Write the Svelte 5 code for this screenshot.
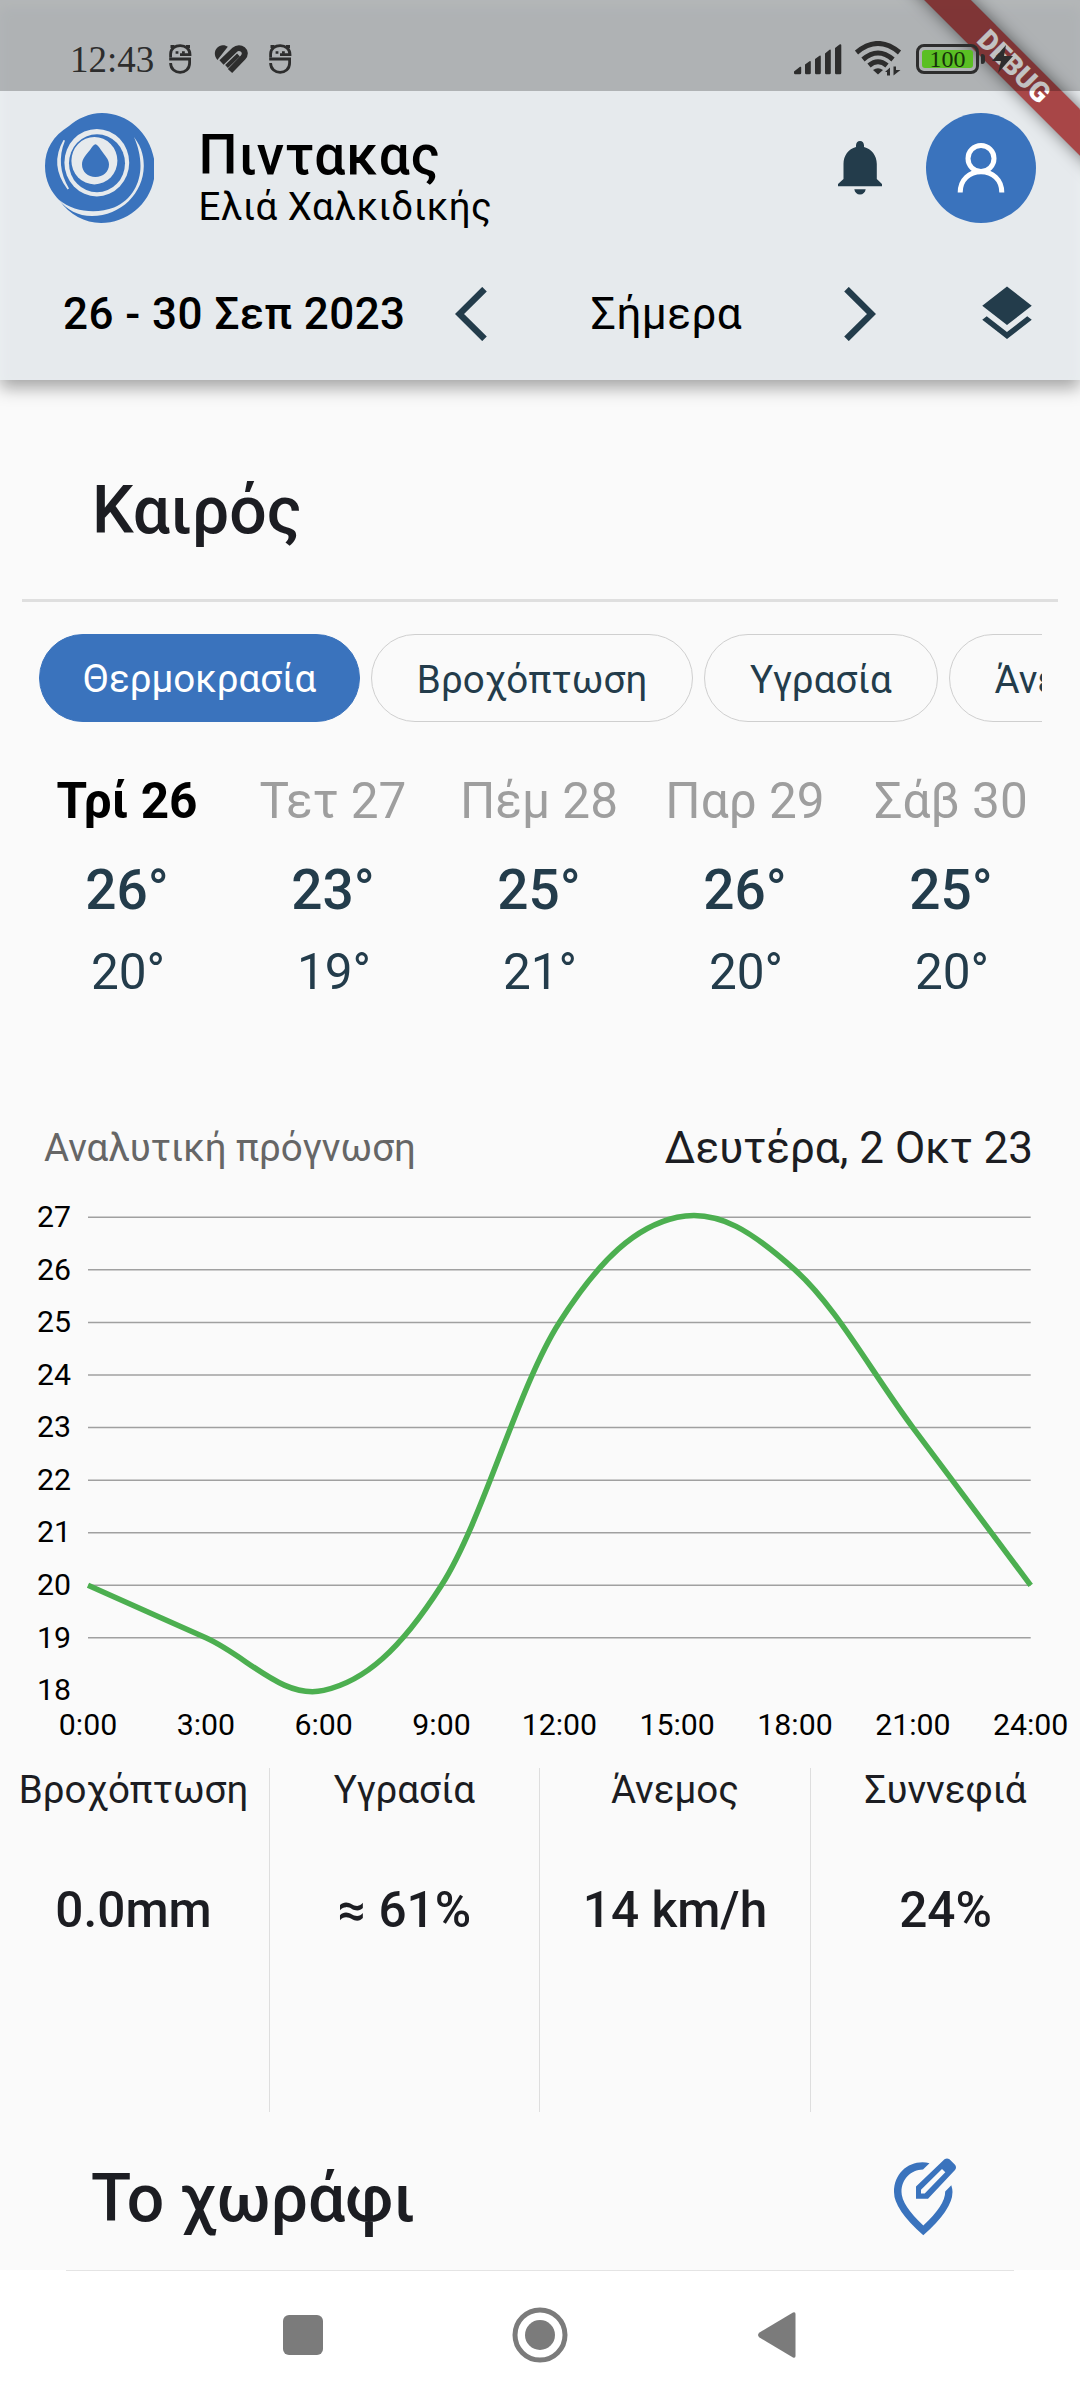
<script>
	const chips = ['Θερμοκρασία', 'Βροχόπτωση', 'Υγρασία', 'Άνεμος'];
	let activeChip = $state('Θερμοκρασία');

	const days = [
		{ name: 'Τρί 26', high: 26, low: 20 },
		{ name: 'Τετ 27', high: 23, low: 19 },
		{ name: 'Πέμ 28', high: 25, low: 21 },
		{ name: 'Παρ 29', high: 26, low: 20 },
		{ name: 'Σάβ 30', high: 25, low: 20 }
	];
	let activeDay = $state(0);

	const stats = [
		{ label: 'Βροχόπτωση', value: '0.0mm' },
		{ label: 'Υγρασία', value: '≈ 61%' },
		{ label: 'Άνεμος', value: '14 km/h' },
		{ label: 'Συννεφιά', value: '24%' }
	];

	// chart
	const temps = [20, 19, 18, 20, 25, 27, 26, 23, 20];
	const ticks = [27, 26, 25, 24, 23, 22, 21, 20, 19, 18];
	const left = 88;
	const right = 1030.7;
	const top = 39.3;
	const step = 52.57;
	const smoothness = 0.35;

	const x = (i) => left + (i * (right - left)) / (temps.length - 1);
	const y = (t) => top + (27 - t) * step;

	function curve(values) {
		const pts = values.map((v, i) => [x(i), y(v)]);
		let d = `M${pts[0][0]} ${pts[0][1]}`;
		let off = [0, 0];
		for (let i = 1; i < pts.length; i++) {
			const prev = pts[i - 1];
			const cur = pts[i];
			const next = pts[i + 1] ?? cur;
			const c1 = [prev[0] + off[0], prev[1] + off[1]];
			off = [((next[0] - prev[0]) / 2) * smoothness, ((next[1] - prev[1]) / 2) * smoothness];
			d += ` C${c1[0]} ${c1[1]} ${cur[0] - off[0]} ${cur[1] - off[1]} ${cur[0]} ${cur[1]}`;
		}
		return d;
	}
</script>

{#snippet creature()}
	<svg class="creature" width="23" height="30" viewBox="0 0 23 30">
		<path d="M1.6 13.5V10C1.6-1.2 21-1.2 21 10.6H11" />
		<path d="M.2 15H20.6V19C20.6 31.5 1.6 31.5 1.6 19" />
		<path class="solid" d="M1.5 1h4v3h-4zM17 1h4v3h-4zM6.6 7.2h2.8v2.6H6.6zM13 7.2h2.8v2.6H13z" />
	</svg>
{/snippet}

<div class="screen">
	<!-- System status bar, drawn over the app bar -->
	<div class="status">
		<span class="clock">12:43</span>
		{@render creature()}
		<svg class="heart" width="34" height="29" viewBox="0 0 34 29">
			<path class="solid" d="M3.400 15C-2.600 8 3 0 9 .3c2 0 3.600 .6 4.800 1.500z" />
			<path d="M7.500 17.500 20.500 5C26-.2 34.500 6.500 29 12.500L16 26" />
			<path class="thin" d="M12.500 21.500 24.500 10" />
		</svg>
		{@render creature()}

		<svg class="signal" width="48" height="31" viewBox="0 0 48 31">
			<path d="M0 27.500 6 22.800q1.200-.5 1.200.8V29q0 1.300-1.300 1.300H1.300Q0 30.300 0 29zM11 20.500l4.500-3.200q1.300-.6 1.300.8V29q0 1.300-1.300 1.300h-3.200Q11 30.300 11 29zM21 15l4.500-3.300q1.300-.6 1.300.8V29q0 1.300-1.300 1.300h-3.200Q21 30.300 21 29zM31 9.500l4.500-3.800q1.300-.6 1.300.8V29q0 1.300-1.300 1.300h-3.200Q31 30.300 31 29zM41 4l4.500-3.600q1.800-.6 1.800.8V29q0 1.300-1.300 1.300h-3.700Q41 30.300 41 29z" />
		</svg>
		<svg class="wifi" width="47" height="36" viewBox="0 0 47 36">
			<path d="M1.500 11.500Q23-6.500 44.500 11.500" />
			<path d="M8 18.500Q23 5.500 38 18.500" />
			<path d="M14 24.500Q23 17 32 24.500" />
			<path class="solid" d="M18 29q5-3.500 10 0l-5 4.500zM35 26.500v8h-3v-3.500h-2zM38.500 34.500v-9h2.500v3.500h4.500z" />
		</svg>
		<div class="battery"><span>100</span></div>
		<svg class="bolt" width="22" height="30" viewBox="0 0 22 30">
			<path class="solid" d="M14 1 0 17h9L6 29 21 12h-9z" />
		</svg>
	</div>

	<header>
		<div class="topbar">
			<svg class="logo" width="109" height="110" viewBox="0 0 109 110">
				<path
					class="blue"
					d="M57 0C44 0 32 6 24 13C8 23 0 36 0 53C0 68 6 79 15 88C24 101 40 110 56 110C84 110 109 88 110 57C110 25 86 0 57 0Z"
				/>
				<ellipse class="pale" cx="51.800" cy="49.700" rx="32.400" ry="33.700" />
				<ellipse class="blue" cx="52" cy="50.300" rx="28" ry="29" />
				<ellipse class="pale" cx="49.400" cy="47.700" rx="23" ry="23.700" />
				<path
					class="blue"
					d="M50.400 31.300C52 31.300 54 34 56 37C60 43 64 46 64 51.500C64 59 58 64 50.400 64C43 64 37 59 37 51.500C37 46 41 42 45 37C47.500 33.500 49 31.300 50.400 31.300Z"
				/>
				<path class="pale" d="M18.500 27Q4 52 22.600 76.500L24 75.500Q10 52 20 27.500Z" />
				<path
					class="pale"
					d="M89 24C98 36 98.800 46 98.800 53C98.500 80 76 103 47 103C33 103 22 97 13.500 86.500C29 99.500 52 101 69 94.500C87 87 95.500 70 95.500 53C95.500 43 93 33 89 24Z"
				/>
			</svg>
			<div class="titles">
				<h1>Πιντακας</h1>
				<p>Ελιά Χαλκιδικής</p>
			</div>
			<svg class="bell" width="44" height="54" viewBox="0 0 44 54">
				<path
					d="M22 0C24.500 0 26 2 26 4.500V6C33.500 8 38.800 14.500 38.800 23V38L44 43V45.300H0V43L5.500 38V23C5.500 14.500 10.500 8 18 6V4.500C18 2 19.500 0 22 0ZM16.300 48.300H27.700C27.200 51.500 25 53.600 22 53.600C19 53.600 16.800 51.500 16.300 48.300Z"
				/>
			</svg>
			<button class="avatar" aria-label="Προφίλ">
				<svg width="48" height="50" viewBox="0 0 48 50">
					<circle cx="24" cy="15.500" r="13" />
					<path d="M3.200 49.500C3.200 36.500 12.500 28.700 24 28.700S44.800 36.500 44.800 49.500" />
				</svg>
			</button>
		</div>
		<div class="range">
			<span class="dates">26 - 30 Σεπ 2023</span>
			<svg width="32" height="54" viewBox="0 0 32 54">
				<path class="arrow" d="M29.500 2.200 4.500 27 29.500 51.800" />
			</svg>
			<span class="today">Σήμερα</span>
			<svg width="32" height="54" viewBox="0 0 32 54">
				<path class="arrow" d="M2.500 2.200 27.500 27 2.500 51.800" />
			</svg>
			<svg class="layers" width="66" height="66" viewBox="0 0 24 24">
				<path
					d="M11.990 18.540l-7.370-5.730L3 14.070l9 7 9-7-1.630-1.270-7.380 5.740zM12 16l7.360-5.730L21 9l-9-7-9 7 1.630 1.270L12 16z"
				/>
			</svg>
		</div>
	</header>

	<main>
		<h2>Καιρός</h2>
		<div class="rule"></div>

		<div class="chips">
			{#each chips as chip}
				<button class:active={chip === activeChip} onclick={() => (activeChip = chip)}>{chip}</button>
			{/each}
		</div>

		<div class="days">
			{#each days as day, i}
				<button class="day" onclick={() => (activeDay = i)}>
					<span class="name" class:selected={i === activeDay}>{day.name}</span>
					<span class="high">{day.high}°</span>
					<span class="low">{day.low}°</span>
				</button>
			{/each}
		</div>

		<div class="forecast">
			<span>Αναλυτική πρόγνωση</span>
			<span class="date">Δευτέρα, 2 Οκτ 23</span>
		</div>

		<svg class="chart" width="1080" height="590" viewBox="0 0 1080 590">
			{#each ticks as t}
				{#if t > 18}
					<line x1={left} x2={right} y1={y(t)} y2={y(t)} />
				{/if}
				<text x="71" y={y(t) + 9.7} text-anchor="end">{t}</text>
			{/each}
			<path d={curve(temps)} />
			{#each temps as _, i}
				<text x={x(i)} y="556.500" text-anchor="middle">{i * 3}:00</text>
			{/each}
		</svg>

		<div class="stats">
			{#each stats as stat}
				<div class="stat">
					<span>{stat.label}</span>
					<strong>{stat.value}</strong>
				</div>
			{/each}
		</div>

		<div class="field">
			<h2>Το χωράφι</h2>
			<svg width="110" height="110" viewBox="0 0 110 110">
				<path
					d="M59.500 23.200Q56 22.200 52.500 22.200C37 22.200 24 34 24 52Q24 69.500 53.300 95.300Q82.500 69.500 82.500 52Q82.500 49 81.300 45.300L75.200 51.500Q75.400 65 53.300 85.500Q31.500 65 31.500 52C31.500 39 41 29.800 53 29.600Z"
				/>
				<path
					fill-rule="evenodd"
					d="M46 46.500 74.500 19.300Q77 17.500 79.500 19.300L85 24.800Q87 27.500 85 30L58 58.800H46ZM51 49.700V53.600H54.700L75.300 32.300 72 29Z"
				/>
			</svg>
		</div>
	</main>

	<nav>
		<svg width="60" height="60" viewBox="0 0 60 60">
			<rect x="10" y="10" width="40" height="40" rx="6" />
		</svg>
		<svg width="60" height="60" viewBox="0 0 60 60">
			<circle class="ring" cx="30" cy="30" r="25" />
			<circle cx="30" cy="30" r="15" />
		</svg>
		<svg width="60" height="60" viewBox="0 0 60 60">
			<path d="M46 7.500Q48.500 6.500 48.500 9V51Q48.500 53.500 46 52.500L12.500 32.500Q9.500 30 12.500 27.500Z" />
		</svg>
	</nav>

	<div class="debug">DEBUG</div>
</div>

<style>
	:global(body) {
		margin: 0;
		background: #fff;
	}

	.screen {
		position: relative;
		width: 1080px;
		height: 2400px;
		overflow: hidden;
		display: flex;
		flex-direction: column;
		background: #fafafa;
		font-family: Roboto, 'Noto Sans', sans-serif;
		color: #1c1d22;
	}

	svg {
		display: block;
		flex: none;
	}

	h1,
	h2,
	p {
		margin: 0;
	}

	button {
		font: inherit;
		color: inherit;
		background: none;
		border: none;
		padding: 0;
		cursor: pointer;
	}

	/* Status bar */
	.status {
		position: absolute;
		z-index: 10;
		inset: 0 0 auto 0;
		height: 91px;
		box-sizing: border-box;
		padding: 27px 66px 0 70px;
		display: flex;
		align-items: center;
		background: rgba(0, 0, 0, 0.24);
		color: #2d2d2d;
		font-family: 'Liberation Serif', serif;
	}

	.status svg {
		fill: #2d2d2d;
	}

	.clock {
		width: 99px;
		padding-top: 2px;
		font-size: 37px;
		line-height: 40px;
	}

	.creature path,
	.heart path,
	.wifi path {
		fill: none;
		stroke: #2d2d2d;
		stroke-width: 2.8;
	}

	.status svg path.solid {
		fill: #2d2d2d;
		stroke: none;
	}

	.heart {
		margin: 0 21.500px;
	}

	.heart path {
		stroke-width: 6;
	}

	.heart path.thin {
		stroke-width: 4;
	}

	.signal {
		margin-left: auto;
	}

	.wifi {
		margin: 0 14px 0 13px;
	}

	.wifi path {
		stroke-width: 5;
	}

	.battery {
		position: relative;
		width: 63px;
		height: 30px;
		box-sizing: border-box;
		padding: 3px;
		border: 3px solid #2d2d2d;
		border-radius: 8px;
		margin-right: 13px;
	}

	.battery span {
		display: block;
		height: 18px;
		border-radius: 3px;
		background: #5abf23;
		color: #16300a;
		font-size: 24px;
		line-height: 19px;
		text-align: center;
	}

	.battery::after {
		content: '';
		position: absolute;
		right: -9px;
		top: 7px;
		width: 4px;
		height: 10px;
		border-radius: 1px 3px 3px 1px;
		background: #2d2d2d;
	}

	/* App bar */
	header {
		position: relative;
		z-index: 1;
		height: 379.500px;
		box-sizing: border-box;
		padding-top: 91px;
		background: #e6eaed;
		box-shadow:
			0 8px 16px rgba(0, 0, 0, 0.34),
			inset 0 8px 12px #ecf0f2;
	}

	.topbar {
		height: 154px;
		box-sizing: border-box;
		padding: 0 44px 0 45px;
		display: flex;
		align-items: center;
	}

	.logo .blue {
		fill: #3a73bd;
	}

	.logo .pale {
		fill: #e6eaed;
	}

	.titles {
		flex: 1;
		padding: 14px 0 0 44.500px;
		color: #000;
	}

	h1 {
		font-size: 55px;
		font-weight: 500;
		line-height: 64px;
		letter-spacing: 0.95px;
	}

	.titles p {
		font-size: 38.500px;
		line-height: 40px;
		letter-spacing: 0.52px;
	}

	.bell {
		fill: #233c4b;
		margin-right: 44px;
	}

	.avatar {
		width: 110px;
		height: 110px;
		border-radius: 50%;
		background: #3a73bd;
		display: flex;
		align-items: center;
		justify-content: center;
	}

	.avatar svg {
		fill: none;
		stroke: #fff;
		stroke-width: 5;
	}

	.range {
		height: 130px;
		margin-top: 4px;
		display: grid;
		grid-template-columns: 440px 62px 329px 57px 1fr;
		align-items: center;
		justify-items: center;
		font-size: 44px;
		letter-spacing: 0.45px;
		color: #000;
	}

	.dates {
		justify-self: start;
		padding-left: 63px;
		font-weight: 500;
	}

	.arrow {
		fill: none;
		stroke: #233c4b;
		stroke-width: 6.500;
	}

	.layers {
		justify-self: end;
		margin-right: 40px;
		fill: #233c4b;
	}

	/* Weather */
	h2 {
		font-size: 66px;
		font-weight: 500;
	}

	main > h2 {
		padding: 91px 0 0 92px;
		line-height: 80px;
	}

	.rule {
		height: 2.500px;
		margin: 48.500px 22px 0;
		background: #dfdfdf;
	}

	.chips {
		display: flex;
		gap: 11px;
		margin: 32px 38px 0 39px;
		overflow: hidden;
	}

	.chips button {
		flex: none;
		height: 88px;
		box-sizing: border-box;
		padding: 3px 44.800px 0;
		border: 1px solid #cfcfcf;
		border-radius: 44px;
		font-size: 38.500px;
		letter-spacing: 0.1px;
		color: #233c4b;
	}

	.chips button.active {
		padding: 2px 42.700px 0;
		letter-spacing: 0;
		background: #3a73bd;
		border-color: #3a73bd;
		color: #fff;
	}

	.days {
		display: grid;
		grid-template-columns: repeat(5, 206px);
		margin: 44px 0 0 24px;
	}

	.day {
		display: flex;
		flex-direction: column;
		align-items: center;
		font-size: 49.500px;
	}

	.name {
		line-height: 70px;
		color: #9e9e9e;
	}

	.name.selected {
		font-weight: 700;
		color: #000;
	}

	.high {
		font-size: 55px;
		font-weight: 500;
		line-height: 108px;
		color: #233c4b;
	}

	.low {
		padding-left: 2px;
		line-height: 56px;
		color: #233c4b;
	}

	.forecast {
		height: 60px;
		margin-top: 118px;
		padding: 0 47px 0 44px;
		display: flex;
		align-items: center;
		justify-content: space-between;
		font-size: 38.500px;
		color: #666;
	}

	.forecast .date {
		font-size: 44px;
		color: #1c1d22;
	}

	.chart line {
		stroke: #a0a0a0;
		stroke-width: 1.500;
	}

	.chart path {
		fill: none;
		stroke: #4caf50;
		stroke-width: 5.500;
	}

	.chart text {
		font-size: 30.250px;
		fill: #000;
	}

	.stats {
		display: grid;
		grid-template-columns: 270px 270px 271px 269px;
		height: 344px;
	}

	.stat {
		display: flex;
		flex-direction: column;
		align-items: center;
		box-sizing: border-box;
		border-right: 1px solid #dedede;
	}

	.stat:first-child {
		padding-right: 2px;
	}

	.stat:last-child {
		border-right: none;
	}

	.stat span {
		font-size: 38.500px;
		line-height: 44px;
		white-space: nowrap;
	}

	.stat strong {
		margin-top: 68px;
		font-size: 49.500px;
		font-weight: 500;
		line-height: 60px;
	}

	.field {
		height: 158px;
		box-sizing: border-box;
		padding: 28px 100px 0 91px;
		display: flex;
		justify-content: space-between;
	}

	.field h2 {
		line-height: 117px;
	}

	.field svg {
		fill: #3a73bd;
	}

	/* System navigation */
	nav {
		flex: 1;
		display: flex;
		align-items: center;
		justify-content: center;
		gap: 177px;
		background:
			linear-gradient(#e4e4e4, #e4e4e4) center top / 948px 1px no-repeat,
			#fff;
	}

	nav svg {
		fill: #7b7b7b;
	}

	nav .ring {
		fill: none;
		stroke: #7b7b7b;
		stroke-width: 5;
	}

	.debug {
		position: absolute;
		z-index: 5;
		top: 49.500px;
		left: 834px;
		width: 360px;
		height: 33px;
		transform: rotate(45deg);
		background: rgba(146, 12, 12, 0.74);
		box-shadow: 0 0 16px rgba(0, 0, 0, 0.5);
		color: #fff;
		font-size: 28px;
		font-weight: 900;
		line-height: 34px;
		text-align: center;
	}
</style>
